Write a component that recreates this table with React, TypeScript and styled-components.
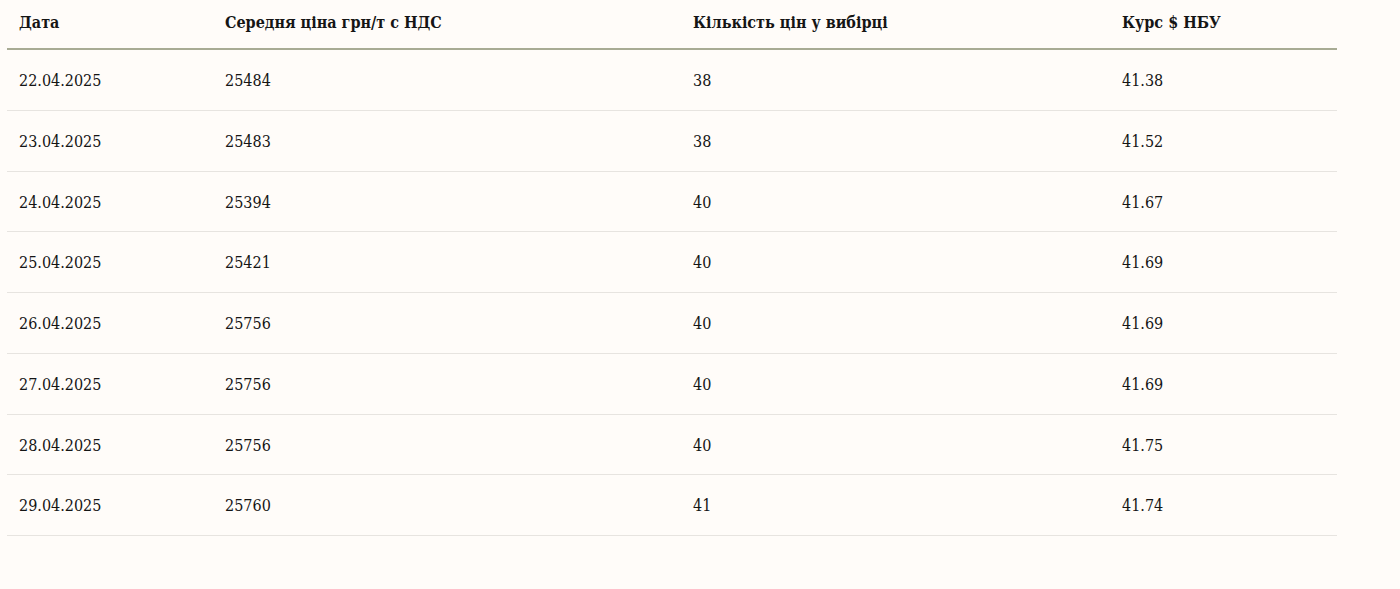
import React from "react";
import styled, { createGlobalStyle } from "styled-components";

const Global = createGlobalStyle`
  html, body { margin: 0; padding: 0; background: #fffcf9; }
  body { font-family: "DejaVu Serif Condensed", "DejaVu Serif", serif; color: #151515; }
`;

const Page = styled.div`
  padding: 7px 63px 0 7px;
`;

const Table = styled.table`
  width: 1330px;
  border-collapse: collapse;
  table-layout: fixed;
`;

const HeadCell = styled.th<{ $w: number }>`
  box-sizing: border-box;
  width: ${(p) => p.$w}px;
  text-align: left;
  font-weight: 700;
  font-size: 16px;
  line-height: 20px;
  padding: 6px 12px 15px;
  border-bottom: 2px solid #a8ab94;
`;

const Row = styled.tr`
  border-bottom: 1px solid #e7e4e0;
`;

const Cell = styled.td`
  font-size: 16px;
  line-height: 19.75px;
  padding: 21px 12px 19px;
  vertical-align: middle;
`;

const cols = [
  { t: "Дата", w: 206 },
  { t: "Середня ціна грн/т с НДС", w: 468 },
  { t: "Кількість цін у вибірці", w: 429 },
  { t: "Курс $ НБУ", w: 227 },
];

const rows = [
  ["22.04.2025", "25484", "38", "41.38"],
  ["23.04.2025", "25483", "38", "41.52"],
  ["24.04.2025", "25394", "40", "41.67"],
  ["25.04.2025", "25421", "40", "41.69"],
  ["26.04.2025", "25756", "40", "41.69"],
  ["27.04.2025", "25756", "40", "41.69"],
  ["28.04.2025", "25756", "40", "41.75"],
  ["29.04.2025", "25760", "41", "41.74"],
];

export default function App() {
  return (
    <>
      <Global />
      <Page>
        <Table>
          <thead>
            <tr>
              {cols.map((c) => (
                <HeadCell key={c.t} $w={c.w}>
                  {c.t}
                </HeadCell>
              ))}
            </tr>
          </thead>
          <tbody>
            {rows.map((r) => (
              <Row key={r[0]}>
                {r.map((v, i) => (
                  <Cell key={i}>{v}</Cell>
                ))}
              </Row>
            ))}
          </tbody>
        </Table>
      </Page>
    </>
  );
}
